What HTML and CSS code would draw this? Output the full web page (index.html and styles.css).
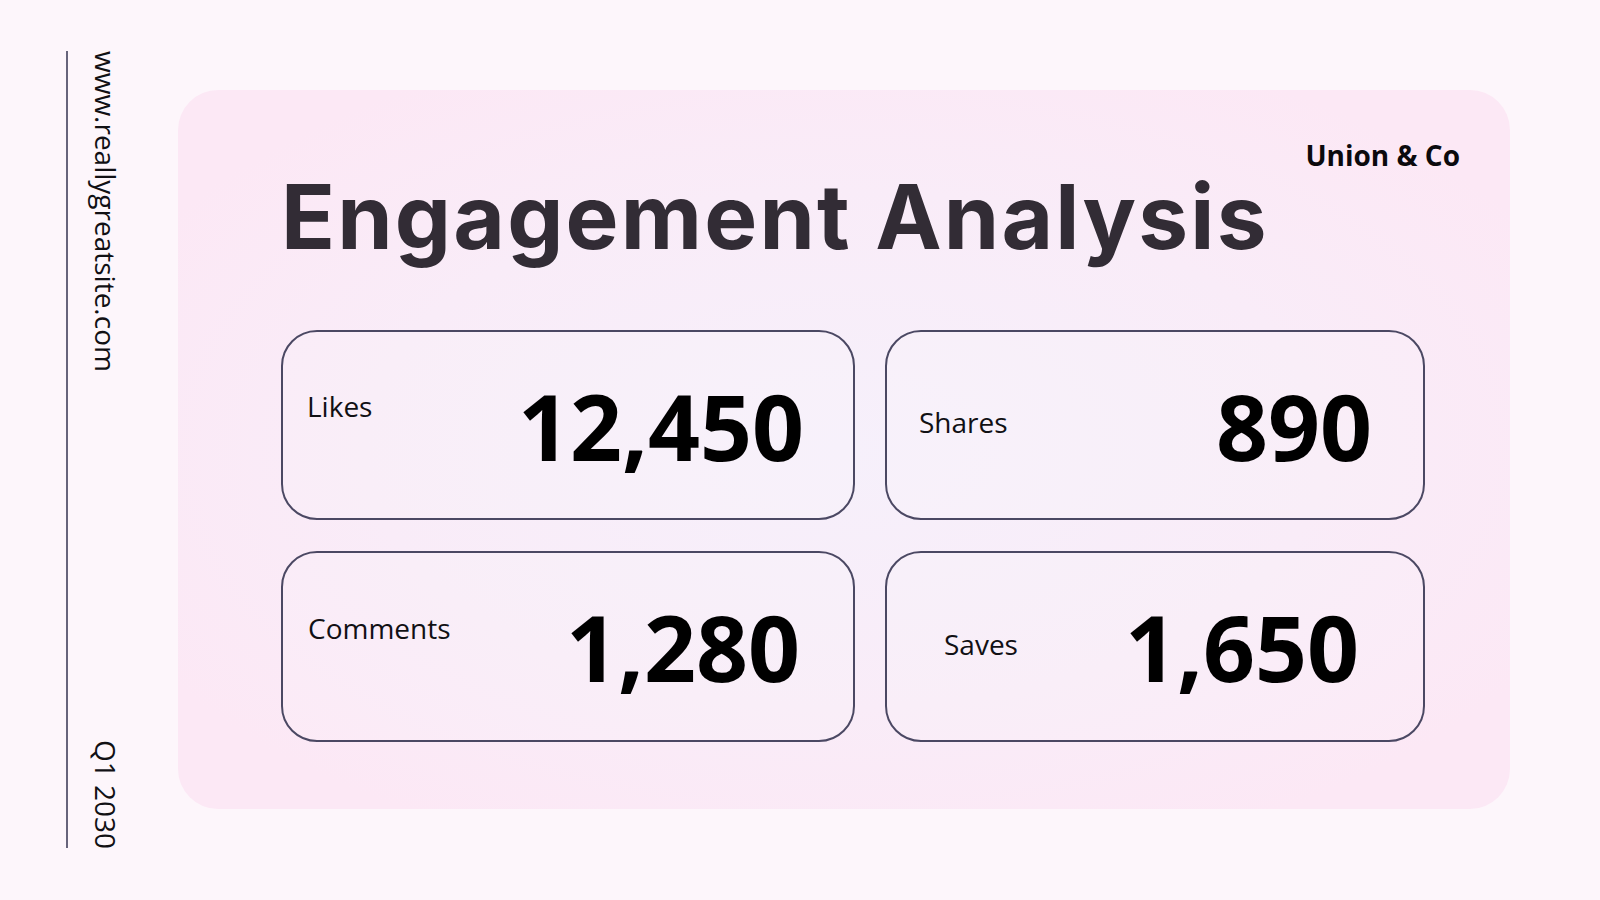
FILE: index.html
```html
<!DOCTYPE html>
<html lang="en">
<head>
<meta charset="utf-8">
<title>Engagement Analysis</title>
<link rel="stylesheet" href="styles.css">
</head>
<body>
  <aside class="side">
    <div class="side-line"></div>
    <div class="side-text">
      <span class="vtext">www.reallygreatsite.com</span>
      <span class="vtext">Q1 2030</span>
    </div>
  </aside>
  <main class="panel">
    <header class="head">
      <h1 class="title">Engagement Analysis</h1>
      <div class="brand">Union &amp; Co</div>
    </header>
    <section class="grid">
      <div class="card card-likes">
        <span class="label">Likes</span>
        <span class="value">12,450</span>
      </div>
      <div class="card card-shares">
        <span class="label">Shares</span>
        <span class="value">890</span>
      </div>
      <div class="card card-comments">
        <span class="label">Comments</span>
        <span class="value">1,280</span>
      </div>
      <div class="card card-saves">
        <span class="label">Saves</span>
        <span class="value">1,650</span>
      </div>
    </section>
  </main>
</body>
</html>
```
FILE: styles.css
```css
* { box-sizing: border-box; }
html, body { margin: 0; padding: 0; }
body {
  width: 1600px;
  height: 900px;
  overflow: hidden;
  background: #fdf6fb;
  display: flex;
  align-items: flex-start;
  font-family: "Open Sans", "Noto Sans", sans-serif;
  color: #0d0b10;
}
.side {
  display: flex;
  gap: 24px;
  padding: 51px 0 0 66px;
  height: 849px;
}
.side-line {
  width: 2px;
  height: 797px;
  background: #67647b;
}
.side-text {
  width: 28px;
  display: flex;
  flex-direction: column;
  justify-content: space-between;
  height: 798px;
}
.vtext {
  writing-mode: vertical-rl;
  font-size: 28px;
  line-height: 28px;
  color: #111014;
  white-space: nowrap;
}
.panel {
  margin: 90px 0 0 58px;
  width: 1332px;
  height: 719px;
  border-radius: 40px;
  background: radial-gradient(ellipse 60% 60% at 50% 50%, #f6f0fb 0%, #f9ecf8 60%, #fce8f5 100%);
  padding: 51px 50px 0 103px;
}
.head {
  display: flex;
  justify-content: space-between;
  align-items: flex-start;
}
.title {
  margin: 31px 0 0;
  font-family: Inter, "Noto Sans", sans-serif;
  font-weight: 700;
  font-size: 89px;
  line-height: 1;
  color: #322c35;
  letter-spacing: 2.2px;
  white-space: nowrap;
}
.brand {
  font-weight: 700;
  font-size: 28px;
  line-height: 1;
  color: #0b0a0d;
  white-space: nowrap;
}
.grid {
  margin-top: 69px;
  display: grid;
  grid-template-columns: 574px 540px;
  grid-template-rows: 190px 191px;
  column-gap: 30px;
  row-gap: 31px;
}
.card {
  border: 2px solid #4b4863;
  border-radius: 36px;
  display: flex;
  justify-content: space-between;
  align-items: flex-start;
  background: rgba(255, 255, 255, 0.12);
}
.label {
  font-size: 28px;
  line-height: 1;
  color: #111014;
}
.value {
  margin-top: 49px;
  font-size: 91px;
  font-weight: 700;
  line-height: 1;
  color: #000;
  white-space: nowrap;
}
.card-likes { padding: 0 49px 0 24px; }
.card-likes .label { margin-top: 60px; }
.card-shares { padding: 0 51px 0 32px; }
.card-shares .label { margin-top: 76px; }
.card-comments { padding: 0 53px 0 25px; }
.card-comments .label { margin-top: 61px; }
.card-saves { padding: 0 64px 0 57px; }
.card-saves .label { margin-top: 77px; }
```
